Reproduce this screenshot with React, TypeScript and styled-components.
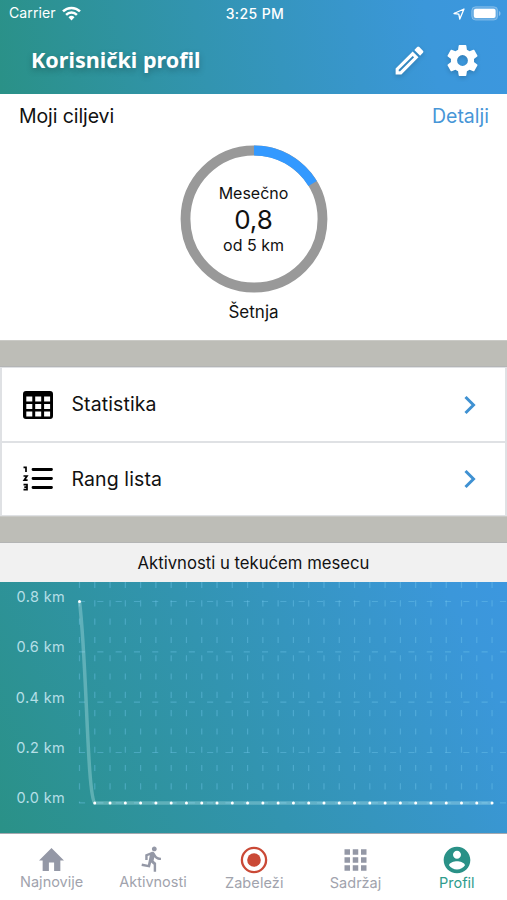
import React from 'react';
import styled, { createGlobalStyle } from 'styled-components';

const GlobalStyle = createGlobalStyle`
  *, *::before, *::after { box-sizing: border-box; }
  body { margin: 0; background: #fff; font-family: Inter, "Liberation Sans", sans-serif; }
  svg { display: block; }
`;

const Screen = styled.div`
  width: 507px;
  height: 900px;
  display: flex;
  flex-direction: column;
  overflow: hidden;
  background: #fff;
  color: #111;
`;

const Label = styled.span<{ $size: number; $spacing?: number; $color?: string; $weight?: number }>`
  font-size: ${p => p.$size}px;
  line-height: 1.2;
  letter-spacing: ${p => p.$spacing ?? 0}px;
  color: ${p => p.$color ?? 'inherit'};
  font-weight: ${p => p.$weight ?? 400};
  white-space: nowrap;
`;

const Header = styled.header`
  height: 94px;
  flex: none;
  display: flex;
  flex-direction: column;
  color: #fff;
  background: linear-gradient(79.5deg, #2a9187 0%, #3294b0 40%, #3b97da 84%, #3c97df 100%);
`;

const StatusBar = styled.div`
  height: 28px;
  display: grid;
  grid-template-columns: 1fr auto 1fr;
  align-items: center;
  padding: 0 6px 0 9px;
`;

const StatusGroup = styled.div<{ $end?: boolean }>`
  display: flex;
  align-items: center;
  gap: 6px;
  padding-bottom: 1px;
  justify-content: ${p => (p.$end ? 'flex-end' : 'flex-start')};
`;

const TitleBar = styled.div`
  height: 66px;
  display: flex;
  align-items: center;
  justify-content: space-between;
  padding: 0 26px 2px 31px;
`;

const Title = styled.h1`
  margin: 0;
  font: 700 21.6px/30px "Noto Sans", sans-serif;
  text-shadow: 0 3px 6px rgba(0, 0, 0, 0.25);
`;

const Actions = styled.div`
  display: flex;
  align-items: center;
  gap: 16px;
  svg { filter: drop-shadow(0 2px 2px rgba(0, 0, 0, 0.16)); }
`;

const Goals = styled.section`
  height: 246px;
  flex: none;
  display: flex;
  flex-direction: column;
  align-items: center;
`;

const GoalsHeading = styled.div`
  width: 100%;
  height: 44px;
  display: flex;
  justify-content: space-between;
  padding: 0 18px 0 19px;
  span { line-height: 44px; }
`;

const Ring = styled.div`
  width: 148px;
  height: 148px;
  margin-top: 7px;
  display: grid;
  > * { grid-area: 1 / 1; }
`;

const RingText = styled.div`
  display: flex;
  flex-direction: column;
  align-items: center;
  gap: 0.7px;
  padding-top: 39px;
`;

const Activity = styled.div`
  margin-top: 9px;
  display: flex;
`;

const Band = styled.div`
  height: 27px;
  flex: none;
  background: #bdbdb7;
  border-top: 1px solid #cacac6;
  border-bottom: 1px solid #b4b5b5;
`;

const Menu = styled.nav`
  height: 149px;
  flex: none;
  display: grid;
  grid-template-rows: 1fr 1fr;
  gap: 2px;
  padding: 1px 2px;
  background: #dfe1e4;
`;

const MenuRow = styled.div`
  display: grid;
  grid-template-columns: 50px 1fr 24px;
  align-items: center;
  padding: 1px 24px 0 19.5px;
  background: #fff;
`;

const ChartTitle = styled.div`
  height: 39px;
  flex: none;
  display: flex;
  align-items: center;
  justify-content: center;
  padding-top: 1px;
  background: #f1f1f1;
`;

const Chart = styled.div`
  height: 251px;
  flex: none;
  display: grid;
  grid-template-columns: 79px 1fr;
  background: linear-gradient(65deg, #2a9187 0%, #3294b0 46%, #3b97da 90%, #3c97df 100%);
`;

const Axis = styled.div`
  display: grid;
  grid-template-rows: repeat(5, 50.35px);
  align-content: start;
  justify-items: end;
  padding: 6px 14px 0 0;
`;

const TabBar = styled.footer`
  height: 67px;
  flex: none;
  display: grid;
  grid-template-columns: repeat(5, 101.3px);
  padding-left: 1px;
  border-top: 1px solid #a5a9b0;
  background: #fff;
`;

const Tab = styled.div<{ $active?: boolean }>`
  display: flex;
  flex-direction: column;
  align-items: center;
  padding-top: 12px;
  color: ${p => (p.$active ? '#2a9187' : '#9498a6')};
  span { color: ${p => (p.$active ? '#2f9c8d' : '#a1a3ad')}; }
`;

type IconProps = { path: string; width: number; height?: number; box?: string };

const Icon = ({ path, width, height = width, box = '0 0 24 24' }: IconProps) => (
  <svg width={width} height={height} viewBox={box} fill="currentColor" preserveAspectRatio="none">
    <path fillRule="evenodd" d={path} />
  </svg>
);

const paths = {
  pencil:
    'M14.06 9.02l.92.92L5.92 19H5v-.92l9.06-9.06M17.66 3c-.25 0-.51.1-.7.29l-1.83 1.83 3.75 3.75 1.83-1.83a.996.996 0 0 0 0-1.41l-2.34-2.34A.98.98 0 0 0 17.66 3zm-3.6 3.19L3 17.25V21h3.75L17.81 9.94l-3.75-3.75z',
  gear:
    'M19.43 12.98c.04-.32.07-.64.07-.98s-.03-.66-.07-.98l2.11-1.65a.5.5 0 0 0 .12-.64l-2-3.46a.5.5 0 0 0-.61-.22l-2.49 1a7.3 7.3 0 0 0-1.69-.98l-.38-2.65A.49.49 0 0 0 14 2h-4a.49.49 0 0 0-.49.42l-.38 2.65c-.61.25-1.17.59-1.69.98l-2.49-1a.5.5 0 0 0-.61.22l-2 3.46a.5.5 0 0 0 .12.64l2.11 1.65c-.04.32-.07.65-.07.98s.03.66.07.98l-2.11 1.65a.5.5 0 0 0-.12.64l2 3.46c.12.22.39.3.61.22l2.49-1c.52.4 1.08.73 1.69.98l.38 2.65c.03.24.24.42.49.42h4c.25 0 .46-.18.49-.42l.38-2.65c.61-.25 1.17-.59 1.69-.98l2.49 1c.23.09.49 0 .61-.22l2-3.46a.5.5 0 0 0-.12-.64l-2.11-1.65zM12 15.5a3.5 3.5 0 1 1 0-7 3.5 3.5 0 0 1 0 7z',
  home: 'M12 2L0 14h3.5v10H9.5v-8h5v8h6V14H24z',
  runner:
    'M13.49 5.48c1.1 0 2-.9 2-2s-.9-2-2-2-2 .9-2 2 .9 2 2 2zm-3.6 13.9l1-4.4 2.1 2v6h2v-7.5l-2.1-2 .6-3c1.3 1.5 3.3 2.5 5.5 2.5v-2c-1.9 0-3.5-1-4.3-2.4l-1-1.6c-.4-.6-1-1-1.7-1-.3 0-.5.1-.8.1l-5.2 2.2v4.7h2v-3.4l1.8-.7-1.6 8.1-4.9-1-.4 2 7 1.4z',
  grid:
    'M4 8h4V4H4v4zm6 12h4v-4h-4v4zm-6 0h4v-4H4v4zm0-6h4v-4H4v4zm6 0h4v-4h-4v4zm6-10v4h4V4h-4zm-6 4h4V4h-4v4zm6 6h4v-4h-4v4zm0 6h4v-4h-4v4z',
  account:
    'M12 2C6.48 2 2 6.48 2 12s4.48 10 10 10 10-4.48 10-10S17.52 2 12 2zm0 3c1.66 0 3 1.34 3 3s-1.34 3-3 3-3-1.34-3-3 1.34-3 3-3zm0 14.2c-2.5 0-4.71-1.28-6-3.22.03-1.99 4-3.08 6-3.08 1.99 0 5.97 1.09 6 3.08-1.29 1.94-3.5 3.22-6 3.22z',
};

const Wifi = () => (
  <svg width="19" height="15" viewBox="0 0 19 15" fill="none" stroke="#fff" strokeWidth="2.5">
    <path d="M1 5.4a12.2 12.2 0 0 1 17 0M4.1 8.8a7.7 7.7 0 0 1 10.8 0" />
    <path d="M6.5 11.2a4.3 4.3 0 0 1 6 0L9.5 14.4z" fill="#fff" stroke="none" />
  </svg>
);

const Location = () => (
  <svg width="12" height="12" viewBox="0 0 12 12" fill="none" stroke="#fff" strokeWidth="1.3" strokeLinejoin="round">
    <path d="M11 1L1 5.5l4.8.7L6.8 11z" />
  </svg>
);

const Battery = () => (
  <svg width="30" height="15" viewBox="0 0 30 15">
    <rect x=".7" y=".7" width="26" height="13.4" rx="4" fill="#fff" fillOpacity=".2" stroke="#fff" strokeOpacity=".25" />
    <rect x="2.8" y="2.8" width="21.800" height="9.2" rx="2" fill="#fff" />
    <path d="M28 5c2 .7 2 4.3 0 5z" fill="#fff" fillOpacity=".4" />
  </svg>
);

const Table = () => (
  <svg width="36" height="30" viewBox="1 0 36 30">
    <path
      fillRule="evenodd"
      d="M6 1h23a3 3 0 0 1 3 3v22a3 3 0 0 1-3 3H5a3 3 0 0 1-3-3V4a3 3 0 0 1 3-3zM5.300 6.500v5h6v-5zM14.200 6.500v5h6v-5zM23.100 6.500v5h6v-5zM5.300 14.100v5h6v-5zM14.200 14.100v5h6v-5zM23.100 14.100v5h6v-5zM5.300 21.600v5h6v-5zM14.200 21.600v5h6v-5zM23.100 21.600v5h6v-5z"
    />
  </svg>
);

const NumberedList = () => (
  <svg width="36" height="28" viewBox="0 0 36 28" fill="none" stroke="#000">
    <path strokeWidth="2.8" strokeLinecap="round" d="M11 4.500H29.500M11 13.500H29.500M11 22.500H29.500" />
    <path strokeWidth="1.7" d="M1.500 2.300H4V7M1.500 11H5L2.200 15.200H5.600M1.500 19.700H5V24.700H1.500M2.300 22.200H5" />
  </svg>
);

const Chevron = () => (
  <svg width="24" height="24" viewBox="0 0 24 24" fill="none" stroke="#3f91d2" strokeWidth="3">
    <path d="M8.500 4L16.500 12L8.500 20" />
  </svg>
);

const Record = () => (
  <svg width="28" height="28" viewBox="0 0 28 28" fill="none">
    <circle cx="14" cy="14" r="12.100" stroke="#ca4936" strokeWidth="2.300" />
    <circle cx="14" cy="14" r="6.800" fill="#ca4936" />
  </svg>
);

const PlotSvg = styled.svg`
  overflow: visible;
`;

const days = Array.from({ length: 28 }, (_, i) => 0.5 + i * 15.28);
const levels = [19.5, 69.8, 120.1, 170.5, 220.8];

const Plot = () => (
  <PlotSvg width="428" height="251" viewBox="0 0 428 251" fill="none">
    <g stroke="#72c9ee" strokeOpacity=".4" strokeWidth="1.22" strokeDasharray="6.1 12.2">
      {levels.map(y => <path key={y} d={`M0 ${y}H428`} />)}
      {days.map(x => <path key={x} d={`M${x} 0V221`} />)}
    </g>
    <path d="M.5 19.500C8 80 8 212 15.800 221H413.100" stroke="#c6eeee" strokeOpacity=".32" strokeWidth="3.500" />
    <g fill="#fff">
      {days.map((x, i) => <circle key={x} cx={x} cy={i === 0 ? 19.5 : 221} r="1.500" />)}
    </g>
  </PlotSvg>
);

export default function App() {
  return (
    <>
      <GlobalStyle />
      <Screen>
        <Header>
          <StatusBar>
            <StatusGroup>
              <Label $size={14.1} $spacing={0.05}>Carrier</Label>
              <Wifi />
            </StatusGroup>
            <Label $size={14} $weight={500} $spacing={0.4}>3:25 PM</Label>
            <StatusGroup $end>
              <Location />
              <Battery />
            </StatusGroup>
          </StatusBar>
          <TitleBar>
            <Title>Korisnički profil</Title>
            <Actions>
              <Icon path={paths.pencil} width={37} />
              <Icon path={paths.gear} width={37} />
            </Actions>
          </TitleBar>
        </Header>

        <Goals>
          <GoalsHeading>
            <Label $size={19.5} $spacing={-0.1}>Moji ciljevi</Label>
            <Label $size={19.5} $color="#4796d7">Detalji</Label>
          </GoalsHeading>
          <Ring>
            <svg width="148" height="148" viewBox="0 0 148 148" fill="none" strokeWidth="9.800">
              <circle cx="74" cy="74" r="68.500" stroke="#999" />
              <path d="M74 5.500A68.500 68.500 0 0 1 132.600 38.500" stroke="#3399ff" />
            </svg>
            <RingText>
              <Label $size={16}>Mesečno</Label>
              <Label $size={26}>0,8</Label>
              <Label $size={16}>od 5 km</Label>
            </RingText>
          </Ring>
          <Activity><Label $size={17}>Šetnja</Label></Activity>
        </Goals>

        <Band />
        <Menu>
          <MenuRow><Table /><Label $size={19.5} $spacing={0.1}>Statistika</Label><Chevron /></MenuRow>
          <MenuRow><NumberedList /><Label $size={19.5} $spacing={0.1}>Rang lista</Label><Chevron /></MenuRow>
        </Menu>
        <Band />

        <ChartTitle><Label $size={16.7}>Aktivnosti u tekućem mesecu</Label></ChartTitle>
        <Chart>
          <Axis>
            {['0.8 km', '0.6 km', '0.4 km', '0.2 km', '0.0 km'].map(text => (
              <Label key={text} $size={14.5} $spacing={0.35} $color="#b5dfe7">{text}</Label>
            ))}
          </Axis>
          <Plot />
        </Chart>

        <TabBar>
          <Tab><Icon path={paths.home} width={25} height={27} box="0 0 24 26" /><Label $size={14.5}>Najnovije</Label></Tab>
          <Tab><Icon path={paths.runner} width={29} height={27} box="0 1 24 23" /><Label $size={14.5}>Aktivnosti</Label></Tab>
          <Tab><Record /><Label $size={14.5} $spacing={0.1}>Zabeleži</Label></Tab>
          <Tab><Icon path={paths.grid} width={33} height={28} box="0 1.5 24 21" /><Label $size={14.5}>Sadržaj</Label></Tab>
          <Tab $active><Icon path={paths.account} width={28} box="1.5 1.5 21 21" /><Label $size={14.5}>Profil</Label></Tab>
        </TabBar>
      </Screen>
    </>
  );
}
